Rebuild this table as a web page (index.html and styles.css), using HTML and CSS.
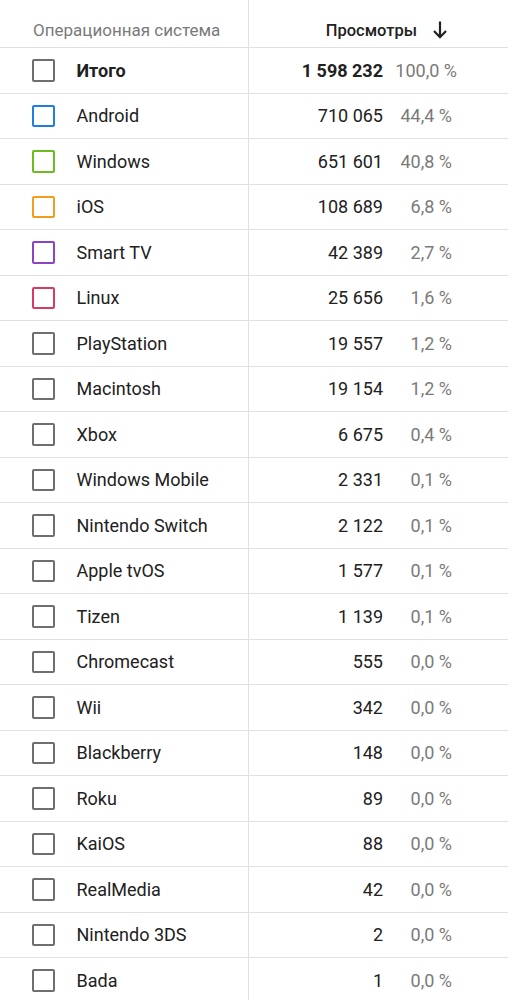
FILE: index.html
```html
<!DOCTYPE html>
<html lang="ru">
<head>
  <meta charset="UTF-8">
  <meta name="viewport" content="width=device-width, initial-scale=1">
  <title>Операционная система</title>
  <link rel="stylesheet" href="styles.css">
</head>
<body>

  <div class="report">
    <!-- Заголовок -->
    <div class="row head">
      <div class="cell name-cell"><span class="head-title">Операционная система</span></div>
      <div class="cell views-cell">
        <span class="head-views">Просмотры</span>
        <svg class="sort" width="14" height="18" viewBox="0 0 14 18"><path d="M7 0.5V16M1 10l6 6.2 6-6.2" fill="none" stroke="#212121" stroke-width="2.2"/></svg>
      </div>
    </div>

    <div class="row total">
      <div class="cell name-cell"><span class="box"></span><span class="name">Итого</span></div>
      <div class="cell views-cell"><span class="num">1 598 232</span><span class="pct">100,0 %</span></div>
    </div>

    <div class="row">
      <div class="cell name-cell"><span class="box blue"></span><span class="name">Android</span></div>
      <div class="cell views-cell"><span class="num">710 065</span><span class="pct">44,4 %</span></div>
    </div>
    <div class="row">
      <div class="cell name-cell"><span class="box green"></span><span class="name">Windows</span></div>
      <div class="cell views-cell"><span class="num">651 601</span><span class="pct">40,8 %</span></div>
    </div>
    <div class="row">
      <div class="cell name-cell"><span class="box orange"></span><span class="name">iOS</span></div>
      <div class="cell views-cell"><span class="num">108 689</span><span class="pct">6,8 %</span></div>
    </div>
    <div class="row">
      <div class="cell name-cell"><span class="box purple"></span><span class="name">Smart TV</span></div>
      <div class="cell views-cell"><span class="num">42 389</span><span class="pct">2,7 %</span></div>
    </div>
    <div class="row">
      <div class="cell name-cell"><span class="box red"></span><span class="name">Linux</span></div>
      <div class="cell views-cell"><span class="num">25 656</span><span class="pct">1,6 %</span></div>
    </div>
    <div class="row">
      <div class="cell name-cell"><span class="box"></span><span class="name">PlayStation</span></div>
      <div class="cell views-cell"><span class="num">19 557</span><span class="pct">1,2 %</span></div>
    </div>
    <div class="row">
      <div class="cell name-cell"><span class="box"></span><span class="name">Macintosh</span></div>
      <div class="cell views-cell"><span class="num">19 154</span><span class="pct">1,2 %</span></div>
    </div>
    <div class="row">
      <div class="cell name-cell"><span class="box"></span><span class="name">Xbox</span></div>
      <div class="cell views-cell"><span class="num">6 675</span><span class="pct">0,4 %</span></div>
    </div>
    <div class="row">
      <div class="cell name-cell"><span class="box"></span><span class="name">Windows Mobile</span></div>
      <div class="cell views-cell"><span class="num">2 331</span><span class="pct">0,1 %</span></div>
    </div>
    <div class="row">
      <div class="cell name-cell"><span class="box"></span><span class="name">Nintendo Switch</span></div>
      <div class="cell views-cell"><span class="num">2 122</span><span class="pct">0,1 %</span></div>
    </div>
    <div class="row">
      <div class="cell name-cell"><span class="box"></span><span class="name">Apple tvOS</span></div>
      <div class="cell views-cell"><span class="num">1 577</span><span class="pct">0,1 %</span></div>
    </div>
    <div class="row">
      <div class="cell name-cell"><span class="box"></span><span class="name">Tizen</span></div>
      <div class="cell views-cell"><span class="num">1 139</span><span class="pct">0,1 %</span></div>
    </div>
    <div class="row">
      <div class="cell name-cell"><span class="box"></span><span class="name">Chromecast</span></div>
      <div class="cell views-cell"><span class="num">555</span><span class="pct">0,0 %</span></div>
    </div>
    <div class="row">
      <div class="cell name-cell"><span class="box"></span><span class="name">Wii</span></div>
      <div class="cell views-cell"><span class="num">342</span><span class="pct">0,0 %</span></div>
    </div>
    <div class="row">
      <div class="cell name-cell"><span class="box"></span><span class="name">Blackberry</span></div>
      <div class="cell views-cell"><span class="num">148</span><span class="pct">0,0 %</span></div>
    </div>
    <div class="row">
      <div class="cell name-cell"><span class="box"></span><span class="name">Roku</span></div>
      <div class="cell views-cell"><span class="num">89</span><span class="pct">0,0 %</span></div>
    </div>
    <div class="row">
      <div class="cell name-cell"><span class="box"></span><span class="name">KaiOS</span></div>
      <div class="cell views-cell"><span class="num">88</span><span class="pct">0,0 %</span></div>
    </div>
    <div class="row">
      <div class="cell name-cell"><span class="box"></span><span class="name">RealMedia</span></div>
      <div class="cell views-cell"><span class="num">42</span><span class="pct">0,0 %</span></div>
    </div>
    <div class="row">
      <div class="cell name-cell"><span class="box"></span><span class="name">Nintendo 3DS</span></div>
      <div class="cell views-cell"><span class="num">2</span><span class="pct">0,0 %</span></div>
    </div>
    <div class="row">
      <div class="cell name-cell"><span class="box"></span><span class="name">Bada</span></div>
      <div class="cell views-cell"><span class="num">1</span><span class="pct">0,0 %</span></div>
    </div>
  </div>

</body>
</html>
```

FILE: styles.css
```css
body { margin: 0; background: #fff; font-family: Roboto, "Noto Sans", sans-serif; color: #212121; }
.report { width: 508px; }
.row { display: grid; grid-template-columns: 249px 1fr; height: 44.5px; border-top: 1px solid #e0e0e0; }
.row.head { height: 47px; border-top: 0; }
.cell { display: flex; align-items: center; }
.name-cell { border-right: 1.5px solid #e0e0e0; padding-left: 32px; gap: 22px; }
.views-cell { padding-left: 0; }

.head-title { font-size: 17px; color: #7a7a7a; padding-top: 13px; margin-left: 1px; }
.head .views-cell { justify-content: flex-end; padding-right: 61px; padding-top: 13px; }
.head-views { font-size: 16.5px; font-weight: 500; color: #212121; }
.sort { margin-left: 16px; }

.box { width: 18.5px; height: 18.5px; border: 2.75px solid #6e6e6e; border-radius: 2px; flex: none; }
.box.blue { border-color: #1f7fe0; }
.box.green { border-color: #6dbb1e; }
.box.orange { border-color: #f29d1c; }
.box.purple { border-color: #8e42c8; }
.box.red { border-color: #d93a62; }

.name { font-size: 18px; color: #212121; }
.num { width: 134px; text-align: right; font-size: 18px; }
.pct { width: 69px; text-align: right; font-size: 18px; color: #7a7a7a; }

.total .name, .total .num { font-weight: 700; }
.total .pct { width: 74px; }
```
